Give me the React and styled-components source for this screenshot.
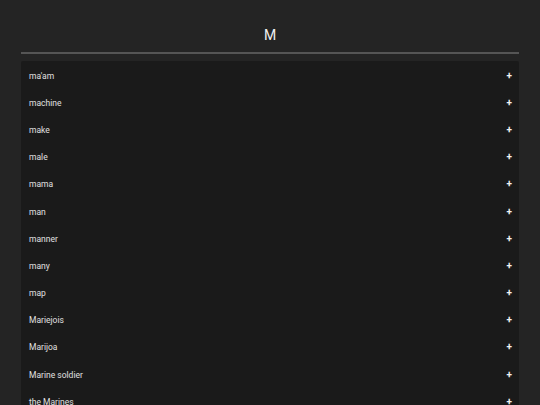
import React from 'react';
import styled, { createGlobalStyle } from 'styled-components';

const GlobalStyle = createGlobalStyle`
  html, body {
    margin: 0;
    padding: 0;
    background: #242424;
  }
  body {
    font-family: Roboto, 'Liberation Sans', sans-serif;
    color: #e6e6e6;
  }
`;

const words = [
  "ma'am",
  'machine',
  'make',
  'male',
  'mama',
  'man',
  'manner',
  'many',
  'map',
  'Mariejois',
  'Marijoa',
  'Marine soldier',
  'the Marines',
  'mark',
];

const Page = styled.div`
  height: 405px;
  overflow: hidden;
  padding: 0 21px;
`;

const Header = styled.h1`
  margin: 0;
  height: 54px;
  display: flex;
  align-items: center;
  justify-content: center;
  padding-top: 18px;
  box-sizing: border-box;
  font-size: 14px;
  font-weight: 400;
  color: #f0f0f0;
  border-bottom: 2px solid #555555;
`;

const List = styled.ul`
  list-style: none;
  margin: 7px 0 0;
  padding: 1px 0 0;
  background: #1a1a1a;
  border-radius: 2px;
`;

const Row = styled.li`
  display: flex;
  align-items: center;
  justify-content: space-between;
  height: 27.2px;
  padding: 0 7px 0 8px;
  font-size: 8.5px;
  color: #e0e0e0;
  cursor: pointer;
`;

const Plus = styled.span`
  font-size: 10px;
  font-weight: 700;
  color: #f2f2f2;
  line-height: 1;
`;

export default function App() {
  return (
    <>
      <GlobalStyle />
      <Page>
        <Header>M</Header>
        <List>
          {words.map((w) => (
            <Row key={w}>
              <span>{w}</span>
              <Plus>+</Plus>
            </Row>
          ))}
        </List>
      </Page>
    </>
  );
}
